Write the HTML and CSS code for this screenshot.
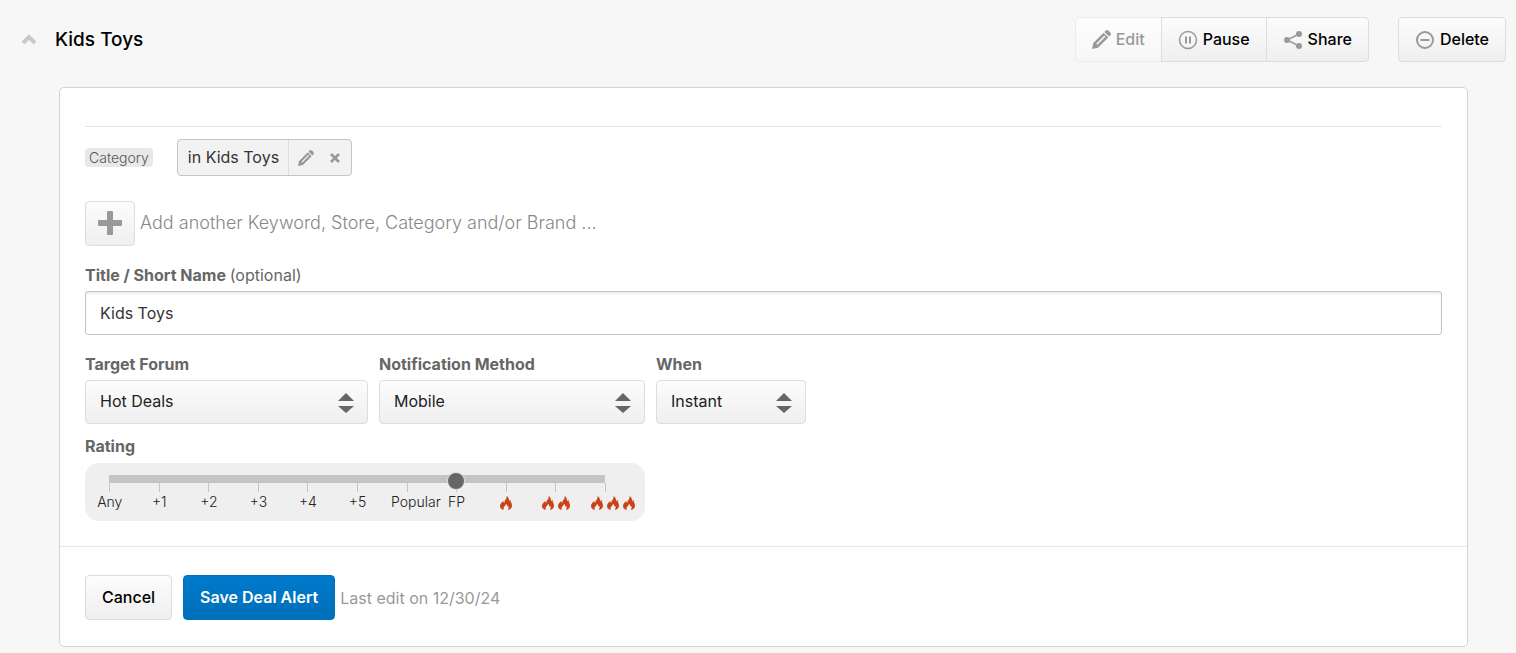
FILE: index.html
```html
<!DOCTYPE html>
<html lang="en">
<head>
<meta charset="utf-8">
<title>Deal Alerts</title>
<link rel="stylesheet" href="styles.css">
</head>
<body>
<svg class="sprite" aria-hidden="true">
  <symbol id="pencil" viewBox="0 0 18 18"><path fill-rule="evenodd" d="M0 18 L1.200 12.400 L11 2.600 L15.400 7 L5.600 16.800 Z M4 13 L5 14 L12.700 6.300 L11.700 5.300 Z"/><path d="M11.800 1.800 L12.900 .7 Q14.300 -.5 15.700 .7 L17.300 2.300 Q18.500 3.700 17.300 5.100 L16.200 6.200 Z"/></symbol>
  <symbol id="flame" viewBox="0 0 12 14"><path d="M6.500 0 C7 2.300 5.800 3.400 5 4.600 C4.400 5.500 4.200 6.100 4.500 6.900 C3.700 6.600 3.300 6 3.200 5 C1.300 6.500 0 8.300 0 10.100 C0 12.100 1.300 13.500 3.800 14 C3.100 12.400 3.700 11.200 4.800 10 C5.600 9.200 6 8.600 5.900 7.800 C7 8.500 7.300 9.500 7 10.700 C7.600 10.500 7.900 10.100 8 9.600 C8.900 11 8.800 12.600 7.800 14 C10.500 13.400 12 11.800 12 9.700 C12 7.700 11.200 6.800 10.700 5.500 C10.500 4.900 10.500 4.400 10.700 3.800 C9.800 4.100 9.200 4.800 9 5.700 C9.300 3.300 8.500 1.100 6.500 0 Z"/></symbol>
  <symbol id="updown" viewBox="0 0 16 20"><path d="M0 8 L8 0 L16 8 Z M0 13 H16 L8 20 Z"/></symbol>
</svg>

<header class="alert-header">
  <button class="collapse" type="button" aria-label="Collapse">
    <svg width="16" height="11" viewBox="0 0 16 11"><path d="M2 9 L8 3 L14 9" fill="none" stroke="currentColor" stroke-width="4"/></svg>
  </button>
  <h1 class="alert-name">Kids Toys</h1>
  <div class="group">
    <button class="btn" type="button" disabled><svg class="icon" width="19" height="19"><use href="#pencil"/></svg>Edit</button>
    <button class="btn" type="button"><svg class="icon" width="20" height="20" viewBox="0 0 20 20"><circle cx="10" cy="10" r="8.500" fill="none" stroke="currentColor" stroke-width="1.500"/><path d="M7 6.500h2v7H7zM11 6.500h2v7h-2z"/></svg>Pause</button>
    <button class="btn" type="button"><svg class="icon" width="20" height="20" viewBox="0 0 20 20"><path d="M16 4 L4 10 L16 16" fill="none" stroke="currentColor" stroke-width="1.500"/><circle cx="16" cy="4" r="3"/><circle cx="4" cy="10" r="3"/><circle cx="16" cy="16" r="3"/></svg>Share</button>
  </div>
  <button class="btn" type="button"><svg class="icon" width="20" height="20" viewBox="0 0 20 20"><circle cx="10" cy="10" r="8" fill="none" stroke="currentColor" stroke-width="2"/><path d="M5.500 9h9v2h-9z"/></svg>Delete</button>
</header>

<form class="panel">
  <div class="fields">
    <div class="category-row">
      <span class="tag">Category</span>
      <div class="chip">
        <span class="chip-name">in Kids Toys</span>
        <button class="chip-action" type="button" aria-label="Edit category"><svg width="16" height="16"><use href="#pencil"/></svg></button>
        <button class="chip-action" type="button" aria-label="Remove category"><svg width="10" height="10" viewBox="0 0 10 10"><path d="M1 1 L9 9 M9 1 L1 9" fill="none" stroke="currentColor" stroke-width="2.500"/></svg></button>
      </div>
    </div>
    <div class="add-row">
      <button class="btn add" id="add" type="button" aria-label="Add"><svg width="24" height="24" viewBox="0 0 24 24"><path d="M10 0h4a1 1 0 0 1 1 1v8h8a1 1 0 0 1 1 1v4a1 1 0 0 1-1 1h-8v8a1 1 0 0 1-1 1h-4a1 1 0 0 1-1-1v-8H1a1 1 0 0 1-1-1v-4a1 1 0 0 1 1-1h8V1a1 1 0 0 1 1-1z"/></svg></button>
      <label class="add-label" for="add">Add another Keyword, Store, Category and/or Brand ...</label>
    </div>
    <label class="label" for="title">Title / Short Name <span class="optional">(optional)</span></label>
    <input class="text" id="title" type="text" value="Kids Toys">
    <div class="selects">
      <div class="field forum">
        <label class="label" for="forum">Target Forum</label>
        <div class="select"><select id="forum"><option>Hot Deals</option></select><svg class="arrows" width="16" height="20"><use href="#updown"/></svg></div>
      </div>
      <div class="field method">
        <label class="label" for="method">Notification Method</label>
        <div class="select"><select id="method"><option>Mobile</option></select><svg class="arrows" width="16" height="20"><use href="#updown"/></svg></div>
      </div>
      <div class="field when">
        <label class="label" for="when">When</label>
        <div class="select"><select id="when"><option>Instant</option></select><svg class="arrows" width="16" height="20"><use href="#updown"/></svg></div>
      </div>
    </div>
    <label class="label" for="rating">Rating</label>
    <div class="rating">
      <input class="range" id="rating" type="range" min="0" max="10" value="7">
      <div class="scale">
        <div class="stop"><span>Any</span></div>
        <div class="stop"><span>+1</span></div>
        <div class="stop"><span>+2</span></div>
        <div class="stop"><span>+3</span></div>
        <div class="stop"><span>+4</span></div>
        <div class="stop"><span>+5</span></div>
        <div class="stop"><span>Popular</span></div>
        <div class="stop"><span>FP</span></div>
        <div class="stop"><span><svg class="flame"><use href="#flame"/></svg></span></div>
        <div class="stop"><span><svg class="flame"><use href="#flame"/></svg><svg class="flame"><use href="#flame"/></svg></span></div>
        <div class="stop"><span><svg class="flame"><use href="#flame"/></svg><svg class="flame"><use href="#flame"/></svg><svg class="flame"><use href="#flame"/></svg></span></div>
      </div>
    </div>
  </div>
  <footer class="actions">
    <button class="btn" type="button">Cancel</button>
    <button class="btn primary" type="submit">Save Deal Alert</button>
    <span class="edited">Last edit on 12/30/24</span>
  </footer>
</form>
</body>
</html>
```
FILE: styles.css
```css
* { box-sizing: border-box; }
body {
  margin: 0;
  background: #f7f7f7;
  color: #333;
  font: 16px/20px Inter, "Liberation Sans", sans-serif;
}
button, input, select { font: inherit; margin: 0; }
svg { display: block; fill: currentColor; flex: none; }
.sprite { position: absolute; width: 0; height: 0; }

.alert-header {
  display: flex;
  align-items: center;
  padding: 17px 10px 0 21px;
}
.collapse { padding: 0; border: 0; background: none; color: #c8c8c8; }
.alert-name {
  flex: 1;
  margin: 0 0 0 18px;
  color: #000;
  font-size: 19px;
  font-weight: 500;
  line-height: 24px;
}
.group { display: flex; margin-right: 29px; }
.btn {
  display: inline-flex;
  align-items: center;
  justify-content: center;
  height: 45px;
  padding: 0 16px 2px;
  border: 1px solid #ddd;
  border-radius: 4px;
  background: linear-gradient(#fcfcfc, #efefef);
  color: #000;
  font-weight: 500;
}
.group .btn { border-radius: 0; }
.group .btn + .btn { margin-left: -1px; }
.group .btn:first-child { border-radius: 4px 0 0 4px; }
.group .btn:last-child { border-radius: 0 4px 4px 0; }
.btn:disabled {
  border-color: #ececec;
  background: linear-gradient(#fdfdfd, #f7f7f7);
  color: #999;
}
.icon { margin: 2px 5px 0 0; color: #999; }

.panel {
  margin: 25px 48px 6px 59px;
  border: 1px solid #d3d3d3;
  border-radius: 5px;
  background: #fff;
}
.fields { padding: 38px 25px 25px; }
.category-row {
  display: flex;
  align-items: center;
  padding-top: 12px;
  border-top: 1px solid #e6e6e6;
}
.tag {
  padding: 0 4px;
  margin-right: 24px;
  border-radius: 4px;
  background: #e8e8e8;
  color: #555;
  font-size: 14px;
  font-weight: 300;
  line-height: 19px;
}
.chip {
  display: flex;
  align-items: center;
  height: 37px;
  padding-right: 2px;
  border: 1px solid #c4c4c4;
  border-radius: 4px;
  background: #f2f2f2;
}
.chip-name {
  padding: 0 9px 0 10px;
  margin-right: 2px;
  border-right: 1px solid #ddd;
  line-height: 35px;
}
.chip-action {
  display: grid;
  place-items: center;
  width: 29px;
  height: 35px;
  padding: 0;
  border: 0;
  background: none;
  color: #999;
}
.add-row {
  display: flex;
  align-items: center;
  gap: 5px;
  margin: 25px 0 19px;
}
.add { width: 50px; padding: 0 0 2px; color: #999; }
.add-label {
  padding-bottom: 2px;
  color: #888;
  font-size: 18px;
  font-weight: 300;
}
.label {
  display: block;
  margin-bottom: 6px;
  color: #666;
  font-weight: 700;
}
.optional { font-weight: 400; }
.text {
  display: block;
  width: 100%;
  height: 44px;
  padding: 0 14px;
  border: 1px solid #c4c4c4;
  border-radius: 3px;
  background: #fff;
  box-shadow: inset 0 2px 2px #eee;
  color: #333;
}
.selects { display: flex; gap: 11px; margin: 19px 0 12px; }
.forum { width: 283px; }
.method { width: 266px; }
.when { width: 150px; }
.select { display: grid; align-items: center; }
.select > * { grid-area: 1 / 1; }
select {
  width: 100%;
  height: 44px;
  padding: 0 40px 2px 14px;
  border: 1px solid #ddd;
  border-radius: 4px;
  appearance: none;
  background: linear-gradient(#fcfcfc, #efefef);
  color: #222;
}
.arrows { justify-self: end; margin: 2px 14px 0 0; color: #666; pointer-events: none; }

.rating {
  max-width: 560px;
  height: 58px;
  margin-top: 7px;
  padding: 10px 15px 0 0;
  border-radius: 14px;
  background: #efefef;
}
.range {
  position: relative;
  display: block;
  width: calc(100% - 34px);
  height: 16px;
  margin: 0 0 -6px 16px;
  appearance: none;
  background: linear-gradient(#c4c4c4, #c4c4c4) center 2px / calc(100% - 15px) 8px no-repeat;
}
.range::-webkit-slider-thumb {
  appearance: none;
  width: 16px;
  height: 16px;
  border-radius: 50%;
  background: #666;
  box-shadow: 0 0 0 1px #ddd;
}
.scale { display: grid; grid-template-columns: repeat(11, minmax(0, 1fr)); }
.stop {
  display: flex;
  flex-direction: column;
  align-items: center;
  color: #222;
  font-size: 14px;
  font-weight: 300;
  line-height: 20px;
  text-align: center;
  white-space: nowrap;
}
.stop::before { content: ""; width: 1px; height: 9px; background: #c4c4c4; }
.stop span { width: 32px; height: 20px; }
.flame { display: inline-block; width: 12px; height: 14px; margin: 4px 2px 0; color: #cb4315; vertical-align: top; }

.actions {
  display: flex;
  align-items: center;
  padding: 28px 25px 26px;
  border-top: 1px solid #e6e6e6;
}
.primary {
  margin: 0 5px 0 11px;
  border-color: #0072bd;
  background: linear-gradient(#007acc, #0070b8);
  color: #fff;
  font-weight: 600;
}
.edited { color: #999; }
```
